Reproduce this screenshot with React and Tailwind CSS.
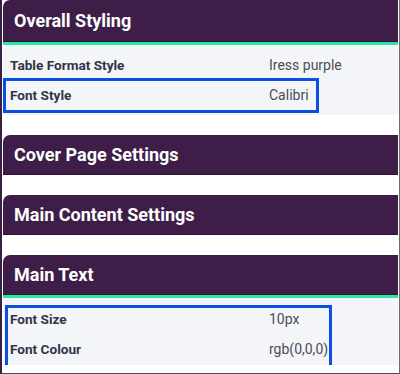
import React from 'react';

const font = { fontFamily: 'Roboto, "Liberation Sans", sans-serif' };

// Section card with purple header, optional green rule and settings rows
const Section = ({ title, accent, tall, children }) => {
  return (
    <div className="rounded-tl-[7px] overflow-hidden">
      <div className={`${tall ? 'h-[42px]' : 'h-10'} bg-[#3e1e48] flex items-center pl-[11px] border-b border-[#2c1234]`}>
        <span className="text-white font-bold text-[18px]">{title}</span>
      </div>
      {accent && <div className="h-[3px] bg-[#27e8a4]" />}
      {children}
    </div>
  );
};

const Row = ({ label, value }) => (
  <div className="h-[30px] flex items-center">
    <span className="w-[266px] pl-[7px] text-[13.6px] font-bold text-[#2f3546]">{label}</span>
    <span className="text-[14px] text-[#4a4e57]">{value}</span>
  </div>
);

export default function App() {
  return (
    <div style={font} className="w-[400px] h-[374px] bg-white border-l-2 border-l-[#3a1f44] border-r border-r-[#6d6d6d] border-b border-b-[#4b4b4b] overflow-hidden">
      <div className="pl-px pr-px flex flex-col">
        <Section title="Overall Styling" accent tall>
          <div className="relative bg-[#f4f5f9] pt-[5px] pb-[5px]">
            <Row label="Table Format Style" value="Iress purple" />
            <Row label="Font Style" value="Calibri" />
            <div className="absolute left-0 top-[33px] w-[316px] h-[35px] border-[3px] border-[#0a4ee2] pointer-events-none" />
          </div>
        </Section>

        <div className="h-5" />
        <Section title="Cover Page Settings" />
        <div className="h-5" />
        <Section title="Main Content Settings" />
        <div className="h-5" />

        <Section title="Main Text" accent>
          <div className="relative bg-[#f4f5f9] pt-[6px] pb-px">
            <Row label="Font Size" value="10px" />
            <Row label="Font Colour" value="rgb(0,0,0)" />
            <div className="absolute left-[2px] top-[7px] w-[327px] h-[66px] border-[3px] border-[#0a4ee2] pointer-events-none" />
          </div>
        </Section>
      </div>
    </div>
  );
}
